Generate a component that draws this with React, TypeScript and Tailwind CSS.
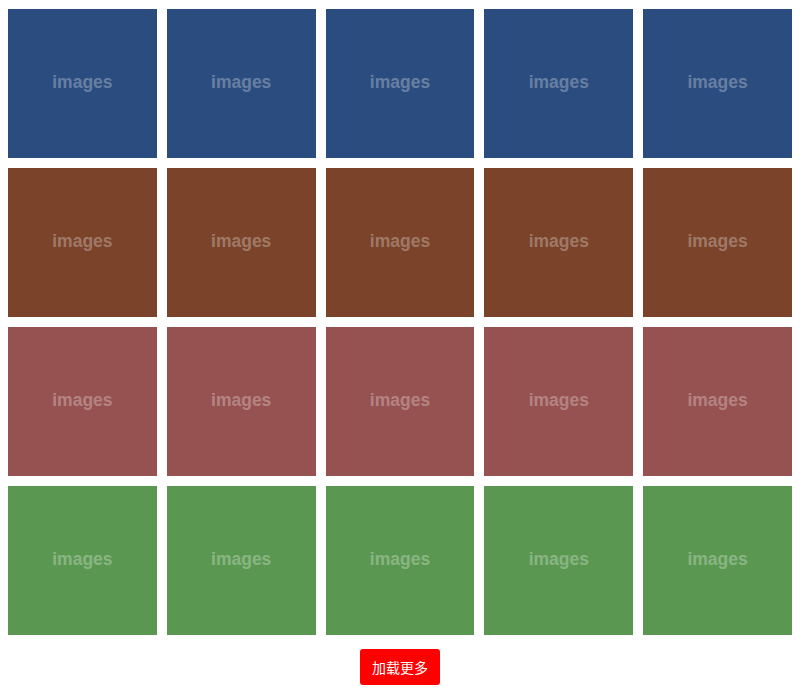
const ROWS = ['bg-[#2b4c7e]', 'bg-[#7a432a]', 'bg-[#965251]', 'bg-[#5a9851]'];

export default function App() {
  return (
    <div className="bg-white min-h-[698px] font-['Liberation_Sans',Arial,sans-serif]">
      <div className="grid grid-cols-5 gap-[10px] px-2 pt-[9px]">
        {ROWS.map((bg, r) =>
          [0, 1, 2, 3, 4].map((c) => (
            <div
              key={`${r}-${c}`}
              className={`${bg} h-[149px] flex items-center justify-center pb-[3px]`}
            >
              <span className="text-[17.5px] font-bold text-white/30">images</span>
            </div>
          ))
        )}
      </div>
      <div className="flex justify-center mt-[14px]">
        <button className="w-[80px] h-[36px] bg-[#ff0000] text-white text-[14px] rounded-[3px] font-['Noto_Sans_CJK_SC',sans-serif]">
          加载更多
        </button>
      </div>
    </div>
  );
}
